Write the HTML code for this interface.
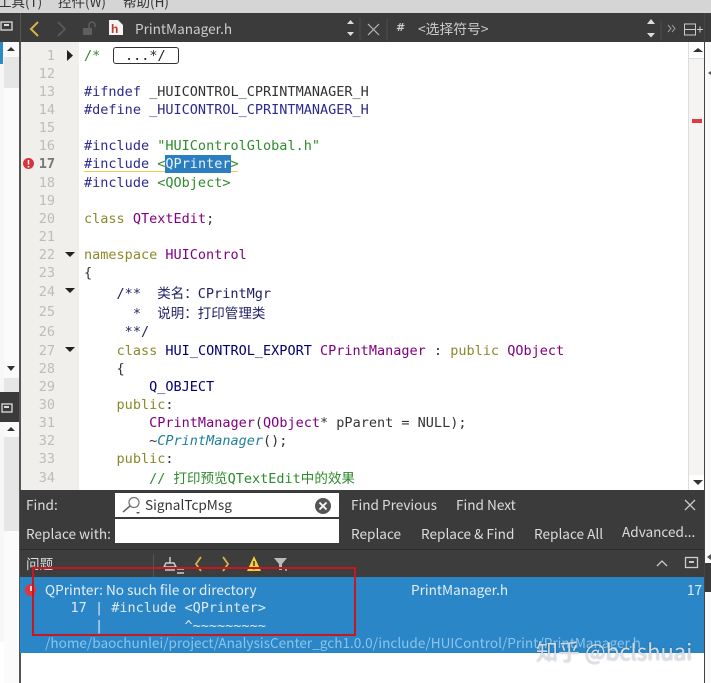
<!DOCTYPE html>
<html><head><meta charset="utf-8">
<style>
html,body{margin:0;padding:0;background:#fff}
#p{position:relative;width:711px;height:683px;overflow:hidden;background:#fff}
#p div{position:absolute}
.c{font:13.52px/18px "DejaVu Sans Mono","Noto Sans CJK SC",monospace;white-space:pre;left:84px;color:#333;filter:blur(.35px);margin-top:1px}
.n{font:13.52px/18px "DejaVu Sans Mono",monospace;color:#bdbcb8;width:34px;left:21px;text-align:right;filter:blur(.35px);margin-top:1px}
.u{font:13.6px/20px "Noto Sans CJK SC","Liberation Sans",sans-serif;color:#ddd;white-space:pre;filter:blur(.3px);margin-top:-1px}
.u.m{font-family:"DejaVu Sans Mono",monospace;margin-top:0}
.k{color:#8a8a2c}.t{color:#800080}.b{color:#2b2b90}.g{color:#2e8b2e}.v{color:#000070}.d{color:#1f1f66}
</style></head><body><div id="p">
<!-- menu -->
<div style="left:0;top:0;width:711px;height:13px;background:#d5d5d5"></div>
<div class="u" style="left:-2px;top:-8px;color:#333;font-size:13.5px">工具(T)</div>
<div class="u" style="left:58px;top:-8px;color:#333;font-size:13.5px">控件(W)</div>
<div class="u" style="left:123px;top:-8px;color:#333;font-size:13.5px">帮助(H)</div>
<!-- toolbar -->
<div style="left:0;top:13px;width:711px;height:29px;background:#3b3b3b"></div>
<div style="left:20px;top:13px;width:1px;height:29px;background:#555"></div>
<svg style="position:absolute;left:0;top:13px" width="711" height="29" fill="none">
<rect x="1" y="13" width="11" height="8" stroke="#ddd" stroke-width="1.3" transform="translate(0,-4)"/><rect x="4" y="11" width="5" height="2" fill="#ddd"/>
<path d="M38 9L31 16L38 23" stroke="#d9b347" stroke-width="2"/>
<path d="M58 9L65 16L58 23" stroke="#5c5c5c" stroke-width="1.6"/>
<rect x="83" y="15" width="9" height="7" fill="#5e5e5e"/><path d="M89 15v-3a3 3 0 0 1 6 0v2" stroke="#5e5e5e" stroke-width="1.5"/>
<path d="M109 7h9l5 5v10h-14z" fill="#f4f4f4"/>
<path d="M347 11l3.500-4 3.500 4zM347 19l3.500 4 3.500-4z" fill="#ddd"/>
<path d="M360 5v23" stroke="#4d4d4d"/>
<path d="M368 11l11 11M379 11l-11 11" stroke="#b8b8b8" stroke-width="1.2"/>
<path d="M387 5v23" stroke="#4d4d4d"/>
<path d="M647 11l4-5 4 5zM647 20l4 4.500 4-4.500z" fill="#ddd"/>
<path d="M661 7v21" stroke="#4d4d4d"/>
<path d="M668 12l3 3.500-3 3.500M672 12l3 3.500-3 3.500" stroke="#9a9a9a"/>
<rect x="684.500" y="11.500" width="11" height="11" stroke="#ccc" transform="translate(0,-.5)"/><path d="M684 16.500h11M697 16.500h6M700 13.500v6" stroke="#ccc"/>
</svg>
<div class="u" style="left:111px;top:24px;color:#c0392b;font:bold 12px/12px 'Liberation Sans',sans-serif">h</div>
<div class="u" style="left:135px;top:19px;color:#ccc">PrintManager.h</div>
<div class="u" style="left:396px;top:19px;color:#ccc;font:bold 11px/20px 'DejaVu Sans',sans-serif">#</div>
<div class="u" style="left:418px;top:19px;color:#ccc;font-size:13.8px">&lt;选择符号&gt;</div>
<!-- left strip -->
<div style="left:0;top:42px;width:4px;height:600px;background:#f7f7f7"></div>
<div style="left:0;top:42px;width:3px;height:22px;background:#2d88c8"></div>
<div style="left:4px;top:42px;width:15px;height:489px;background:#e6e6e6"></div>
<div style="left:4px;top:42px;width:15px;height:15px;background:#fafafa"></div>
<div style="left:4px;top:88px;width:15px;height:274px;background:#fbfbfb"></div>
<div style="left:4px;top:361px;width:15px;height:17px;background:#fafafa"></div>
<div style="left:0;top:392px;width:20px;height:30px;background:#3a3a3a"></div>
<div style="left:4px;top:422px;width:15px;height:15px;background:#fafafa"></div>
<div style="left:4px;top:531px;width:15px;height:152px;background:#fbfbfb"></div>
<div style="left:19px;top:42px;width:2px;height:641px;background:#555"></div>
<svg style="position:absolute;left:0;top:0" width="22" height="683" fill="none">
<path d="M7 51l4-4 4 4z" fill="#333"/><path d="M7 366l4 5 4-5z" fill="#333"/><path d="M7 431l4-4 4 4z" fill="#333"/>
<rect x="2" y="404" width="10" height="8" stroke="#ddd" stroke-width="1.300"/><rect x="4" y="406" width="5" height="2" fill="#ddd"/>
</svg>
<!-- gutter -->
<div style="left:21px;top:42px;width:58px;height:448px;background:#f1efeb"></div>
<!-- right scrollbar -->
<div style="left:688px;top:42px;width:16px;height:448px;background:#f5f4f3;border-left:1px solid #ddd"></div>
<div style="left:689px;top:42px;width:15px;height:16px;background:#fff;border-bottom:1px solid #ddd"></div>
<div style="left:689px;top:475px;width:15px;height:15px;background:#fff"></div>
<div style="left:692px;top:119px;width:10px;height:4px;background:#dd3a44"></div>
<div style="left:704px;top:13px;width:1px;height:670px;background:#444"></div>
<div style="left:705px;top:42px;width:6px;height:641px;background:#fbfbfb"></div>
<div style="left:705px;top:563px;width:6px;height:29px;background:#3a3a3a"></div>
<svg style="position:absolute;left:705px;top:40px" width="6" height="530"><path d="M3 33l3-2v4zM2 517l4-3v6z" fill="#555"/></svg>
<svg style="position:absolute;left:688px;top:42px" width="18" height="450"><path d="M5 10l5-4 5 4z" fill="#333"/><path d="M5 438l5 5 5-5z" fill="#333"/></svg>
<!-- line numbers -->
<div class="n" style="top:46px">1</div><div class="n" style="top:64px">12</div><div class="n" style="top:82px">13</div><div class="n" style="top:100px">14</div><div class="n" style="top:118px">15</div><div class="n" style="top:136px">16</div><div class="n" style="top:154px;color:#777;font-weight:bold">17</div><div class="n" style="top:173px">18</div><div class="n" style="top:191px">19</div><div class="n" style="top:209px">20</div><div class="n" style="top:227px">21</div><div class="n" style="top:245px">22</div><div class="n" style="top:263px">23</div><div class="n" style="top:282px">24</div><div class="n" style="top:302px">25</div><div class="n" style="top:322px">26</div><div class="n" style="top:341px">27</div><div class="n" style="top:359px">28</div><div class="n" style="top:377px">29</div><div class="n" style="top:395px">30</div><div class="n" style="top:413px">31</div><div class="n" style="top:431px">32</div><div class="n" style="top:449px">33</div><div class="n" style="top:468px">34</div>
<svg style="position:absolute;left:21px;top:42px" width="60" height="340">
<path d="M46 8l6 5.500-6 5.500z" fill="#222"/>
<path d="M44 210h10l-5 5zM44 246h10l-5 5zM44 305h10l-5 5z" fill="#222"/>
<circle cx="7.500" cy="121.500" r="5.500" fill="#d9343c"/><path d="M7.500 118v4.500M7.500 124v1.500" stroke="#fff" stroke-width="1.500"/>
</svg>
<!-- code -->
<div class="c g" style="top:46px">/*</div>
<div style="left:113px;top:47px;width:64px;height:15px;border:1px solid #333;border-radius:3px"></div>
<div class="c" style="left:125px;top:46px;color:#222">...*/</div>
<div class="c" style="top:82px"><span class="b">#ifndef</span> _HUICONTROL_CPRINTMANAGER_H</div>
<div class="c b" style="top:100px">#define _HUICONTROL_CPRINTMANAGER_H</div>
<div class="c" style="top:136px"><span class="b">#include</span> <span class="g">"HUIControlGlobal.h"</span></div>
<div style="left:84px;top:171px;width:154px;height:1px;background:#f0c94a"></div>
<div style="left:165px;top:155px;width:66px;height:18px;background:#2b7fc0"></div>
<div class="c" style="top:154px"><span class="b">#include</span> <span class="g">&lt;</span><span style="color:#e8f0f8">QPrinter</span><span class="g">&gt;</span></div>
<div class="c" style="top:173px"><span class="b">#include</span> <span class="g">&lt;QObject&gt;</span></div>
<div class="c" style="top:209px"><span class="k">class</span> <span class="t">QTextEdit</span>;</div>
<div class="c" style="top:245px"><span class="k">namespace</span> <span class="t">HUIControl</span></div>
<div class="c" style="top:263px">{</div>
<div class="c d" style="top:284px">    /**  类名：CPrintMgr</div>
<div class="c d" style="top:304px">      *  说明：打印管理类</div>
<div class="c d" style="top:322px">     **/</div>
<div class="c" style="top:341px">    <span class="k">class</span> <span class="v">HUI_CONTROL_EXPORT</span> <span class="t">CPrintManager</span> : <span class="k">public</span> <span class="t">QObject</span></div>
<div class="c" style="top:359px">    {</div>
<div class="c v" style="top:377px">        Q_OBJECT</div>
<div class="c k" style="top:395px">    public<span style="color:#333">:</span></div>
<div class="c" style="top:413px">        <span class="t">CPrintManager</span>(<span class="t">QObject</span>* pParent = NULL);</div>
<div class="c" style="top:431px">        ~<i style="color:#20809a">CPrintManager</i>();</div>
<div class="c k" style="top:449px">    public<span style="color:#333">:</span></div>
<div class="c g" style="top:469px">        // 打印预览QTextEdit中的效果</div>
<!-- find bar -->
<div style="left:20px;top:490px;width:684px;height:60px;background:#3b3b3b"></div>
<div style="left:20px;top:549px;width:684px;height:1px;background:#2c2c2c"></div>
<div class="u" style="left:26px;top:495px;">Find:</div>
<div class="u" style="left:26px;top:524px;">Replace with:</div>
<div style="left:115px;top:493px;width:224px;height:24px;background:#fff"></div>
<div style="left:115px;top:519px;width:224px;height:24px;background:#fff"></div>
<svg style="position:absolute;left:115px;top:493px" width="224" height="24" fill="none">
<circle cx="19" cy="9.500" r="5" stroke="#777" stroke-width="1.300"/><path d="M15 13l-7 6" stroke="#666" stroke-width="1.600"/><path d="M21 19h4l-2 2z" fill="#555"/>
<circle cx="208" cy="13" r="8" fill="#555"/><path d="M204.500 9.500l7 7M211.500 9.500l-7 7" stroke="#fff" stroke-width="1.800"/>
</svg>
<div class="u" style="left:145px;top:495px;color:#333">SignalTcpMsg</div>
<div class="u" style="left:351px;top:495px;">Find Previous</div>
<div class="u" style="left:456px;top:495px;">Find Next</div>
<div class="u" style="left:351px;top:524px;">Replace</div>
<div class="u" style="left:421px;top:524px;">Replace &amp; Find</div>
<div class="u" style="left:534px;top:524px;">Replace All</div>
<div class="u" style="left:622px;top:522px;">Advanced...</div>
<svg style="position:absolute;left:680px;top:496px" width="20" height="20"><path d="M5 4l10 10M15 4L5 14" stroke="#ccc" stroke-width="1.300"/></svg>
<!-- problems bar -->
<div style="left:20px;top:550px;width:684px;height:27px;background:#3d3d3d"></div>
<div class="u" style="left:26px;top:554px;">问题</div>
<svg style="position:absolute;left:20px;top:550px" width="684" height="28" fill="none">
<path d="M133.500 4v26" stroke="#555"/>
<path d="M150 7v6M146 13h8l2 4h-12zM145 20h10M157 19h7M157 23h7" stroke="#ccc" stroke-width="1.500"/>
<path d="M181 7l-5 7 5 7" stroke="#d9b347" stroke-width="1.800"/>
<path d="M203 7l5 7-5 7" stroke="#d9b347" stroke-width="1.800"/>
<path d="M234 6l7 15h-14z" fill="#f3cf3e"/><path d="M234 11v5M234 17.500v2" stroke="#333" stroke-width="1.400"/>
<path d="M254 8h13l-5 6v6h-3v-6z" fill="#bbb"/><circle cx="266" cy="20" r="1" fill="#bbb"/>
<path d="M637 16l5-5 5 5" stroke="#ccc" stroke-width="1.300"/>
<rect x="665.500" y="7.500" width="12" height="10" stroke="#ccc" stroke-width="1.300"/><rect x="669" y="11" width="5" height="2" fill="#ccc"/>
</svg>
<!-- selected row -->
<div style="left:20px;top:577px;width:684px;height:76px;background:#2a86c6"></div>
<div style="left:25px;top:584px;width:11px;height:12px;border-radius:50%;background:#e0353d"></div>
<div style="left:30px;top:586px;width:2px;height:5px;background:#f4d8d8"></div>
<div class="u" style="left:45px;top:580px;color:#e4eef6">QPrinter: No such file or directory</div>
<div class="u" style="left:411px;top:580px;color:#e4eef6">PrintManager.h</div>
<div class="u" style="left:687px;top:580px;color:#e4eef6">17</div>
<div class="u m" style="left:38px;top:598px;font-size:13.52px;color:#dfe9f2">    17 | #include &lt;QPrinter&gt;</div>
<div class="u m" style="left:38px;top:616px;font-size:13.52px;color:#dfe9f2">       |          ^~~~~~~~~~</div>
<div class="u" style="left:45px;top:633px;color:#8cc4ea">/home/baochunlei/project/AnalysisCenter_gch1.0.0/include/HUIControl/Print/PrintManager.h</div>
<!-- red annotation -->
<div style="left:32px;top:567px;width:320px;height:65px;border:2.5px solid #c8181f"></div>
<!-- watermark -->
<div class="u" style="left:536px;top:637px;font-size:22px;line-height:30px;color:rgba(225,232,240,.9);text-shadow:0 0 1.5px rgba(0,0,0,.4)">知乎 @bclshuai</div>
</div></body></html>
